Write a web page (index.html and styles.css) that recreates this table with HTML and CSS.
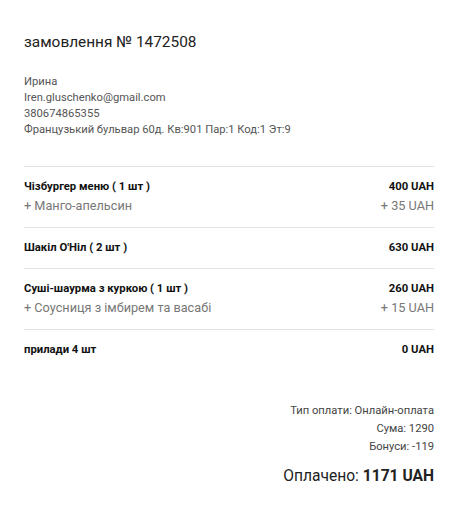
FILE: index.html
```html
<!DOCTYPE html>
<html>
<head>
    <title>Замовлення № 1472508</title>
    <link rel="stylesheet" href="styles.css">
</head>
<body>
    <div class="order">
        <h2 class="order-title">замовлення № 1472508</h2>

        <div class="customer">
            <div>Ирина</div>
            <div>Iren.gluschenko@gmail.com</div>
            <div>380674865355</div>
            <div>Французький бульвар 60д. Кв:901 Пар:1 Код:1 Эт:9</div>
        </div>

        <div class="items">
            <div class="item">
                <div class="item-line">
                    <span class="item-name">Чізбургер меню ( 1 шт )</span>
                    <span class="item-price">400 UAH</span>
                </div>
                <div class="item-extra">
                    <span>+ Манго-апельсин</span>
                    <span>+ 35 UAH</span>
                </div>
            </div>
            <div class="item">
                <div class="item-line">
                    <span class="item-name">Шакіл О'Ніл ( 2 шт )</span>
                    <span class="item-price">630 UAH</span>
                </div>
            </div>
            <div class="item">
                <div class="item-line">
                    <span class="item-name">Суші-шаурма з куркою ( 1 шт )</span>
                    <span class="item-price">260 UAH</span>
                </div>
                <div class="item-extra">
                    <span>+ Соусниця з імбирем та васабі</span>
                    <span>+ 15 UAH</span>
                </div>
            </div>
            <div class="item">
                <div class="item-line">
                    <span class="item-name">прилади 4 шт</span>
                    <span class="item-price">0 UAH</span>
                </div>
            </div>
        </div>

        <div class="summary">
            <div>Тип оплати: Онлайн-оплата</div>
            <div>Сума: 1290</div>
            <div>Бонуси: -119</div>
            <div class="paid">Оплачено: <b>1171 UAH</b></div>
        </div>
    </div>
</body>
</html>
```

FILE: styles.css
```css
body {
    margin: 0;
    padding: 0;
    background: #fff;
    font-family: Roboto, "Noto Sans", Arial, sans-serif;
    color: #222;
}

.order {
    width: 410px;
    padding: 32px 24px 0 24px;
}

.order-title {
    margin: 0;
    font-size: 15.4px;
    font-weight: 400;
    line-height: 20px;
    color: #222;
}

.customer {
    margin-top: 22px;
    font-size: 11.2px;
    line-height: 16px;
    color: #555;
}

.items {
    margin-top: 28px;
}

.item {
    border-top: 1px solid #e2e2e2;
    padding: 10px 0 12px 0;
}

.item-line,
.item-extra {
    display: flex;
    justify-content: space-between;
    align-items: center;
}

.item-line {
    height: 18px;
    font-size: 11.3px;
    font-weight: 700;
    color: #111;
}

.item-extra {
    height: 20px;
    font-size: 12.7px;
    color: #777;
}

.summary {
    margin-top: 32px;
    text-align: right;
    font-size: 11.2px;
    line-height: 18px;
    color: #444;
}

.summary .paid {
    margin-top: 9px;
    font-size: 15.6px;
    line-height: 22px;
    color: #222;
}
```
